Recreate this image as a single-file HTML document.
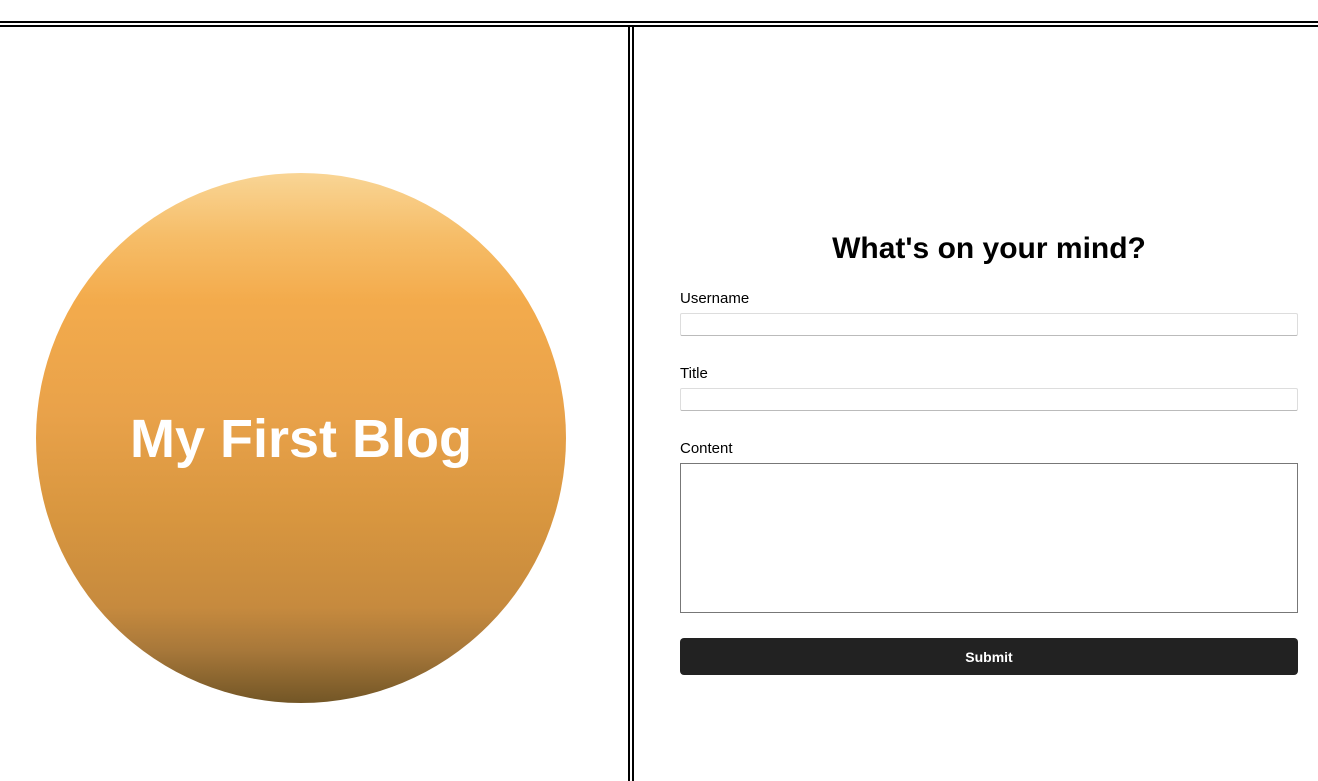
<!DOCTYPE html>
<html><head><meta charset="utf-8"><style>
html,body{margin:0;padding:0;width:1318px;height:781px;overflow:hidden;background:#fff;font-family:"Liberation Sans",Arial,sans-serif;position:relative}
.h{position:absolute;left:0;width:1318px;height:2px;background:#000}
.v{position:absolute;top:26px;height:760px;width:2px;background:#000}
.circle{position:absolute;left:36px;top:173px;width:530px;height:530px;border-radius:50%;
background:linear-gradient(to bottom,#f9d595 0%,#f6bd68 12%,#f3ab4c 24%,#e9a24a 45%,#d8963f 65%,#c68a3e 82%,#a8783a 90%,#735626 100%);
display:flex;align-items:center;justify-content:center}
.circle span{color:#fff;font-weight:bold;font-size:54px;position:relative;top:1px}
h2{position:absolute;left:680px;width:618px;top:231px;margin:0;text-align:center;font-size:30px;font-weight:bold;line-height:36px}
label{position:absolute;left:680px;font-size:15px;color:#000}
.inp{position:absolute;left:680px;width:616px;height:21px;border:1px solid #ddd;border-bottom-color:#bbb;border-radius:2px;box-sizing:content-box}
.ta{position:absolute;left:680px;top:463px;width:616px;height:148px;border:1px solid #777}
.btn{position:absolute;left:680px;top:638px;width:618px;height:37px;background:#222;border-radius:4px;color:#fff;font-weight:bold;font-size:14px;text-align:center;line-height:38px}
</style></head><body>
<div class="h" style="top:21px"></div>
<div class="h" style="top:25px"></div>
<div class="v" style="left:628px"></div>
<div class="v" style="left:632px"></div>
<div class="circle"><span>My First Blog</span></div>
<h2>What's on your mind?</h2>
<label style="top:290px">Username</label>
<div class="inp" style="top:313px"></div>
<label style="top:365px">Title</label>
<div class="inp" style="top:388px"></div>
<label style="top:440px">Content</label>
<div class="ta"></div>
<div class="btn">Submit</div>
</body></html>
